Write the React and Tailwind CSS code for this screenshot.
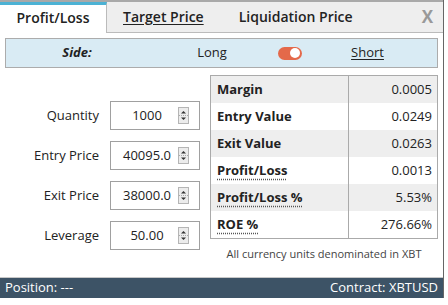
import React from 'react'

const fields = [
  { label: 'Quantity', value: '1000' },
  { label: 'Entry Price', value: '40095.0' },
  { label: 'Exit Price', value: '38000.0' },
  { label: 'Leverage', value: '50.00' },
]

const results = [
  { label: 'Margin', value: '0.0005' },
  { label: 'Entry Value', value: '0.0249' },
  { label: 'Exit Value', value: '0.0263' },
  { label: 'Profit/Loss', value: '0.0013', hint: true },
  { label: 'Profit/Loss %', value: '5.53%', hint: true },
  { label: 'ROE %', value: '276.66%', hint: true },
]

function Spinner() {
  return (
    <svg width="11" height="17" viewBox="0 0 11 17" className="shrink-0">
      <rect x="0.5" y="0.5" width="10" height="16" fill="#ececec" stroke="#b5b5b5" />
      <path d="M3 6.5 L5.5 4 L8 6.5 Z" fill="#333" />
      <path d="M3 10.5 L5.5 13 L8 10.5 Z" fill="#333" />
      <line x1="1" y1="8.5" x2="10" y2="8.5" stroke="#aaa" strokeDasharray="1 1" />
    </svg>
  )
}

function Toggle() {
  return (
    <div className="w-[24px] h-[13px] rounded-full bg-[#e4694a] flex items-center justify-end pr-[2px]">
      <div className="w-[10px] h-[10px] rounded-full bg-white" />
    </div>
  )
}

export default function App() {
  return (
    <div className="w-[448px] h-[305px] bg-white overflow-hidden font-['Open_Sans'] text-[#222]">
      <div className="w-[444px] border-r border-[#666] flex flex-col">
        {/* tabs */}
        <div className="h-[33px] flex border-t-2 border-[#a9a9a9]">
          <div className="w-[107px] bg-white border-t-[3px] border-[#4cb2d4] border-r border-r-[#bbb] flex items-center justify-center text-[14px] font-semibold pb-[3px]">
            Profit/Loss
          </div>
          <div className="flex-1 bg-[#eeeeee] border-b border-[#bbb] flex items-center text-[14px] font-semibold pb-[1px]">
            <span className="ml-[16px] underline underline-offset-2">Target Price</span>
            <span className="ml-[35px]">Liquidation Price</span>
            <span className="ml-auto mr-[10px] text-[17px] font-bold text-[#999]">X</span>
          </div>
        </div>

        {/* body */}
        <div className="h-[244px] flex flex-col pt-[5px]">
          <div className="mx-[5px] h-[30px] bg-[#d9ebf4] border border-[#acacac] flex items-center text-[13px]">
            <div className="w-[142px] text-center font-bold italic">Side:</div>
            <div className="w-[128px] text-center">Long</div>
            <div className="w-[28px] flex justify-center">
              <Toggle />
            </div>
            <div className="w-[127px] text-center underline underline-offset-2">Short</div>
          </div>

          <div className="flex">
            <div className="w-[210px] pt-[33px] flex flex-col gap-[11px]">
              {fields.map((f) => (
                <div key={f.label} className="flex items-center">
                  <div className="w-[99px] text-right text-[13px]">{f.label}</div>
                  <div className="ml-[11px] w-[90px] h-[29px] border border-[#a0a0a0] flex items-center text-[13px]">
                    <div className="flex-1 text-center pl-[5px]">{f.value}</div>
                    <div className="mr-[10px]">
                      <Spinner />
                    </div>
                  </div>
                </div>
              ))}
            </div>

            <div className="w-[228px] mt-[7px]">
              <div className="border border-[#aaa]">
                {results.map((r, i) => (
                  <div key={r.label} className={`flex h-[27px] text-[13px] ${i % 2 === 0 ? 'bg-[#eeeeee]' : 'bg-white'}`}>
                    <div className="w-[138px] border-r border-[#aaa] flex items-center pl-[6px] font-bold">
                      <span className={r.hint ? 'underline decoration-dotted decoration-[#555] underline-offset-[4px]' : ''}>
                        {r.label}
                      </span>
                    </div>
                    <div className="flex-1 flex items-center justify-end pr-[5px]">{r.value}</div>
                  </div>
                ))}
              </div>
              <div className="mt-[7px] text-center text-[11px] text-[#444]">
                All currency units denominated in XBT
              </div>
            </div>
          </div>
        </div>

        {/* footer */}
        <div className="h-[21px] bg-[#3d5366] border-t border-[#c8c8c8] flex items-center justify-between px-[5px] text-[13px] text-white">
          <span>Position: ---</span>
          <span>Contract: XBTUSD</span>
        </div>
      </div>
    </div>
  )
}
